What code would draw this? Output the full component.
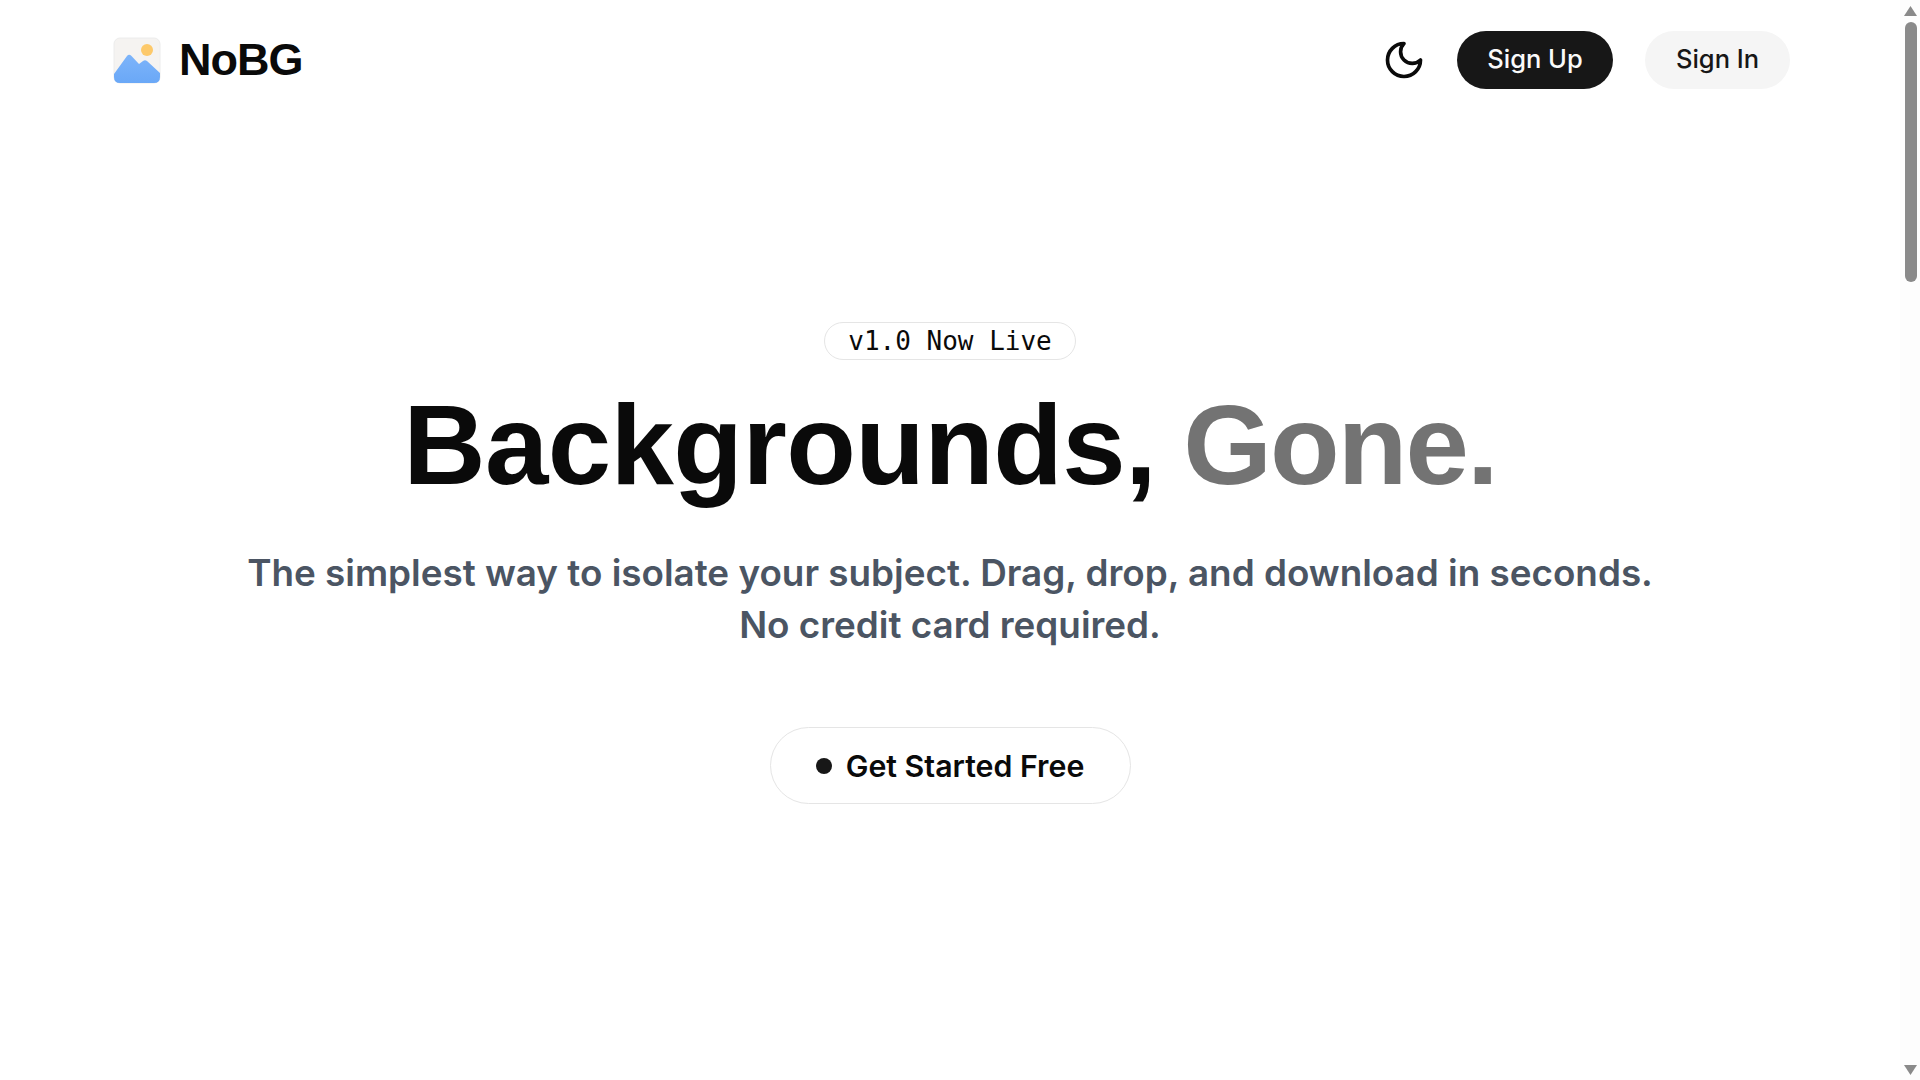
<script>
</script>

<div class="page">
  <div class="content">
    <header class="nav">
      <div class="brand">
        <svg class="logo" viewBox="0 0 48 48" width="48" height="48" aria-hidden="true">
          <defs>
            <linearGradient id="mtn" x1="0" y1="0" x2="0" y2="1">
              <stop offset="0" stop-color="#7db4fa"/>
              <stop offset="1" stop-color="#6aa8f7"/>
            </linearGradient>
          </defs>
          <rect x="1" y="2" width="46" height="45" rx="6" fill="#f5f3f1" stroke="#ececec"/>
          <circle cx="34" cy="14" r="6" fill="#fdc96a"/>
          <path d="M1 38 L14 20 Q16 17.5 18.5 20 L26 28 L30 25 Q32 23.5 34 25 L47 37 V41 Q47 47 41 47 H7 Q1 47 1 41 Z" fill="url(#mtn)"/>
        </svg>
        <span class="name">NoBG</span>
      </div>
      <div class="actions">
        <svg class="moon" viewBox="0 0 24 24" fill="none" stroke="#0a0a0a" stroke-width="2" stroke-linecap="round" stroke-linejoin="round" aria-hidden="true">
          <path d="M12 3a6 6 0 0 0 9 9 9 9 0 1 1-9-9Z"/>
        </svg>
        <button class="signup">Sign Up</button>
        <button class="signin">Sign In</button>
      </div>
    </header>
    <main class="hero">
      <span class="badge">v1.0 Now Live</span>
      <h1>Backgrounds, <span class="muted">Gone.</span></h1>
      <p>The simplest way to isolate your subject. Drag, drop, and download in seconds.<br/>No credit card required.</p>
      <button class="cta"><span class="dot"></span>Get Started Free</button>
    </main>
  </div>
  <div class="scrollbar" aria-hidden="true">
    <svg class="arrow" viewBox="0 0 20 20"><path d="M10.5 6 L17 16 H4 Z" fill="#8a8a8a"/></svg>
    <div class="track"><div class="thumb"></div></div>
    <svg class="arrow" viewBox="0 0 20 20"><path d="M4 5 H17 L10.5 15 Z" fill="#8a8a8a"/></svg>
  </div>
</div>

<style>
  :global(body) { margin: 0; background: #fff; overflow: hidden; }
  .page { display: flex; height: 1080px; font-family: "Inter", "Liberation Sans", sans-serif; color: #0a0a0a; }
  .content { flex: 1; min-width: 0; }
  .scrollbar { width: 20px; display: flex; flex-direction: column; background: #fdfdfd; }
  .arrow { width: 20px; height: 20px; flex: none; }
  .track { flex: 1; padding: 0 3px 0 5px; }
  .thumb { height: 260px; background: #8a8a8a; border-radius: 6px; margin-top: 2px; }
  .nav { display: flex; justify-content: space-between; align-items: center; padding: 31px 110px 0 113px; height: 58px; }
  .brand { display: flex; align-items: center; gap: 18px; }
  .name { font-family: "Liberation Sans", sans-serif; font-size: 45px; font-weight: 700; letter-spacing: -1px; }
  .actions { display: flex; align-items: center; gap: 32px; }
  .moon { width: 44px; height: 44px; margin-right: -1px; }
  button { font-family: inherit; border: none; cursor: pointer; }
  .signup { background: #171717; color: #fafafa; height: 58px; width: 156px; border-radius: 29px; font-size: 25.5px; font-weight: 500; padding: 0 0 3px; }
  .signin { background: #f5f5f5; color: #171717; height: 58px; width: 145px; border-radius: 29px; font-size: 25.5px; font-weight: 500; padding: 0 0 3px; }
  .hero { display: flex; flex-direction: column; align-items: center; padding-top: 233px; }
  .badge { font-family: "DejaVu Sans Mono", monospace; font-size: 26px; line-height: 32px; border: 1px solid #e5e5e5; border-radius: 20px; padding: 2px 23px; }
  h1 { font-family: "Liberation Sans", sans-serif; font-size: 114px; font-weight: 700; margin: 20px 0 0; line-height: 130px; letter-spacing: -0.6px; word-spacing: -4px; }
  .muted { color: #737373; letter-spacing: -1.9px; }
  p { font-size: 36.85px; font-weight: 600; color: #4b5563; text-align: center; line-height: 52px; margin: 37px 0 0; }
  .cta { margin-top: 76px; height: 77px; width: 361px; justify-content: center; background: #fff; border: 1px solid #e5e5e5; border-radius: 39px; font-size: 30.3px; font-weight: 600; color: #0a0a0a; display: flex; align-items: center; gap: 14px; padding: 0; }
  .dot { width: 16px; height: 16px; border-radius: 50%; background: #171717; }
</style>
